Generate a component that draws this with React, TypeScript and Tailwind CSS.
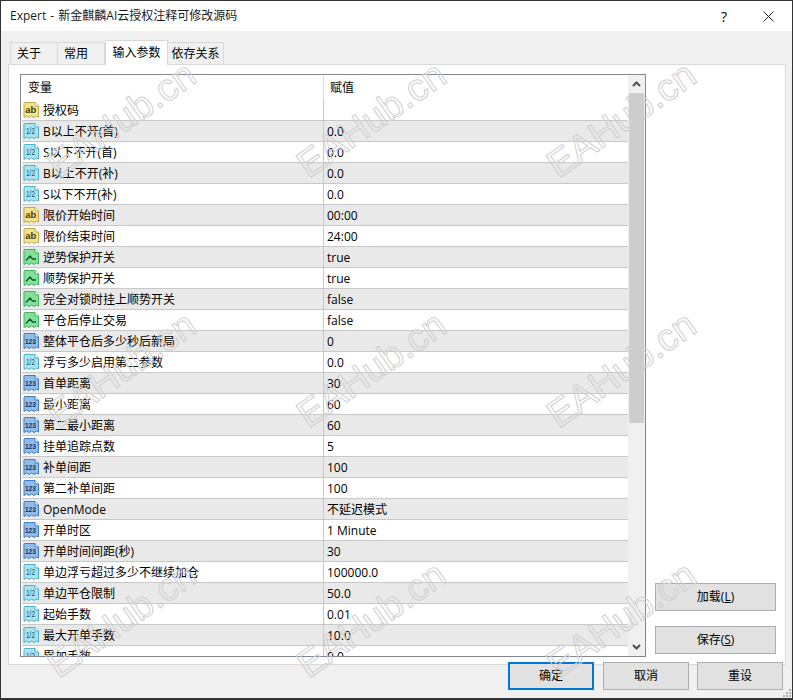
type Kind = "ab" | "half" | "bool" | "num";

const rows: [Kind, string, string][] = [
  ["ab", "授权码", ""],
  ["half", "B以上不开(首)", "0.0"],
  ["half", "S以下不开(首)", "0.0"],
  ["half", "B以上不开(补)", "0.0"],
  ["half", "S以下不开(补)", "0.0"],
  ["ab", "限价开始时间", "00:00"],
  ["ab", "限价结束时间", "24:00"],
  ["bool", "逆势保护开关", "true"],
  ["bool", "顺势保护开关", "true"],
  ["bool", "完全对锁时挂上顺势开关", "false"],
  ["bool", "平仓后停止交易", "false"],
  ["num", "整体平仓后多少秒后新局", "0"],
  ["half", "浮亏多少启用第二参数", "0.0"],
  ["num", "首单距离", "30"],
  ["num", "最小距离", "60"],
  ["num", "第二最小距离", "60"],
  ["num", "挂单追踪点数", "5"],
  ["num", "补单间距", "100"],
  ["num", "第二补单间距", "100"],
  ["num", "OpenMode", "不延迟模式"],
  ["num", "开单时区", "1 Minute"],
  ["num", "开单时间间距(秒)", "30"],
  ["half", "单边浮亏超过多少不继续加仓", "100000.0"],
  ["half", "单边平仓限制", "50.0"],
  ["half", "起始手数", "0.01"],
  ["half", "最大开单手数", "10.0"],
  ["half", "累加手数", "0.0"],
];

const iconColors: Record<Kind, { fill: string; edge: string; ink: string }> = {
  ab: { fill: "#f3e48e", edge: "#c2a84a", ink: "#4a3c08" },
  half: { fill: "#a9e4f0", edge: "#4fb0cc", ink: "#14546e" },
  bool: { fill: "#84e09a", edge: "#3fb561", ink: "#0f5a26" },
  num: { fill: "#92bdea", edge: "#3f7fc4", ink: "#0c3468" },
};

function TypeIcon({ kind }: { kind: Kind }) {
  const c = iconColors[kind];
  return (
    <svg width="16" height="16" viewBox="0 0 16 16" className="shrink-0">
      <path
        d="M1 1.5Q1 .5 2 .5H12L15.5 4V15L13.5 14L11 15.5L8.5 14L6 15.5L3.5 14L1 15.5Z"
        fill={c.fill}
        stroke={c.edge}
        strokeWidth="1"
      />
      <path d="M12 .5V4H15.5" fill="#ffffff" stroke={c.edge} strokeWidth="1" />
      {kind === "ab" && (
        <text x="2.2" y="11" fontSize="9.5" fontWeight="700" fontFamily="Liberation Sans, sans-serif" fill={c.ink}>
          ab
        </text>
      )}
      {kind === "half" && (
        <text
          x="3"
          y="11"
          fontSize="8.5"
          textLength="9"
          lengthAdjust="spacingAndGlyphs"
          fontFamily="Liberation Sans, sans-serif"
          fill={c.ink}
        >
          1/2
        </text>
      )}
      {kind === "num" && (
        <text x="1.9" y="11" fontSize="6.6" fontWeight="700" fontFamily="Liberation Sans, sans-serif" fill={c.ink}>
          123
        </text>
      )}
      {kind === "bool" && <path d="M3 11.5L7 7L9.5 10H13" fill="none" stroke={c.ink} strokeWidth="1.3" />}
    </svg>
  );
}

function Row({ kind, name, value, index }: { kind: Kind; name: string; value: string; index: number }) {
  return (
    <div
      className={`ml-[1px] flex h-[21px] shrink-0 items-center border-b border-[#c8c8c8] ${index % 2 === 1 ? "bg-[#e9e9e9]" : "bg-white"}`}
    >
      <div className="flex w-[301px] shrink-0 items-center gap-[4px] pl-[1px]">
        <TypeIcon kind={kind} />
        <span className="whitespace-nowrap pt-[1px]">{name}</span>
      </div>
      <div className="h-full w-px shrink-0 bg-[#c8c8c8]" />
      <span className="whitespace-nowrap pl-[3px] pt-[1px]">{value}</span>
    </div>
  );
}

function Btn({ label, hot, primary }: { label: string; hot?: string; primary?: boolean }) {
  return (
    <button
      className={`flex h-[28px] w-full items-center justify-center bg-[#e1e1e1] text-[12px] text-black ${
        primary ? "border-2 border-[#0078d7]" : "border border-[#adadad]"
      }`}
    >
      {label}
      {hot && (
        <span>
          (<span className="underline">{hot}</span>)
        </span>
      )}
    </button>
  );
}

const marks = [
  "left-[61px] top-[145px]",
  "left-[311px] top-[145px]",
  "left-[561px] top-[145px]",
  "left-[61px] top-[395px]",
  "left-[311px] top-[395px]",
  "left-[561px] top-[395px]",
  "left-[61px] top-[645px]",
  "left-[311px] top-[645px]",
  "left-[561px] top-[645px]",
];

export default function App() {
  return (
    <div className="relative flex h-[700px] w-[793px] flex-col overflow-hidden border border-b-2 border-[#333333] bg-[#f0f0f0] font-['Open_Sans','Noto_Sans_CJK_SC',sans-serif] text-[12px] text-black">
      {/* title bar */}
      <div className="flex h-[30px] shrink-0 items-center justify-between bg-white pl-[9px] pr-[18px]">
        <span className="text-[#1a1a1a] [word-spacing:1px]">Expert - 新金麒麟AI云授权注释可修改源码</span>
        <div className="flex items-center gap-[36px]">
          <span className="text-[14px]">?</span>
          <svg width="11" height="11" viewBox="0 0 11 11">
            <path d="M0.5 0.5L10.5 10.5M10.5 0.5L0.5 10.5" stroke="#222" strokeWidth="1" />
          </svg>
        </div>
      </div>

      {/* tabs */}
      <div className="flex h-[33px] shrink-0 items-end pl-[9px]">
        <div className="flex h-[22px] w-[48px] items-center border border-b-0 border-[#d9d9d9] bg-[#f0f0f0] pl-[6px]">关于</div>
        <div className="flex h-[22px] w-[47px] items-center border border-b-0 border-l-0 border-[#d9d9d9] bg-[#f0f0f0] pl-[6px]">常用</div>
        <div className="relative z-10 -mb-px flex h-[25px] w-[63px] items-center justify-center border border-b-0 border-[#d9d9d9] bg-white">输入参数</div>
        <div className="flex h-[22px] w-[56px] items-center justify-center border border-b-0 border-l-0 border-[#d9d9d9] bg-[#f0f0f0]">依存关系</div>
      </div>

      {/* tab panel */}
      <div className="ml-[7px] mr-[6px] flex h-[601px] shrink-0 gap-[9px] border border-[#d9d9d9] bg-white pl-[11px] pr-[9px] pt-[9px]">
        <div className="flex h-[583px] w-[626px] shrink-0 border border-[#828790] bg-white">
          <div className="flex min-w-0 flex-1 flex-col overflow-hidden">
            <div className="flex h-[25px] shrink-0 items-center">
              <span className="w-[302px] pl-[7px] pt-[1px]">变量</span>
              <div className="h-full w-px bg-[#d9d9d9]" />
              <span className="pl-[6px] pt-[1px]">赋值</span>
            </div>
            {rows.map(([kind, name, value], i) => (
              <Row key={name} kind={kind} name={name} value={value} index={i} />
            ))}
          </div>
          <div className="flex w-[17px] shrink-0 flex-col bg-[#f0f0f0]">
            <div className="flex h-[18px] items-center justify-center">
              <svg width="9" height="6" viewBox="0 0 9 6">
                <path d="M1 5L4.5 1.5L8 5" fill="none" stroke="#505050" strokeWidth="2" />
              </svg>
            </div>
            <div className="ml-[1px] h-[330px] w-[15px] bg-[#cdcdcd]" />
            <div className="flex-1" />
            <div className="flex h-[18px] items-center justify-center">
              <svg width="9" height="6" viewBox="0 0 9 6">
                <path d="M1 1L4.5 4.5L8 1" fill="none" stroke="#505050" strokeWidth="2" />
              </svg>
            </div>
          </div>
        </div>
        <div className="flex h-[580px] flex-1 flex-col justify-end gap-[15px]">
          <Btn label="加载" hot="L" />
          <Btn label="保存" hot="S" />
        </div>
      </div>

      {/* dialog buttons */}
      <div className="relative z-10 -mt-[3px] flex justify-end gap-[8px] pr-[9px]">
        <div className="mr-[1px] w-[86px]">
          <Btn label="确定" primary />
        </div>
        <div className="w-[86px]">
          <Btn label="取消" />
        </div>
        <div className="w-[86px]">
          <Btn label="重设" />
        </div>
      </div>

      {/* resize grip */}
      <svg width="10" height="10" viewBox="0 0 10 10" className="absolute bottom-0 right-0">
        <path d="M7 1h2v2H7zM4 4h2v2H4zM7 4h2v2H7zM1 7h2v2H1zM4 7h2v2H4zM7 7h2v2H7z" fill="#b0b0b0" />
      </svg>

      {/* watermark */}
      {marks.map((pos) => (
        <span
          key={pos}
          className={`pointer-events-none absolute z-20 origin-bottom-left -rotate-[35deg] whitespace-nowrap font-['Liberation_Sans',sans-serif] text-[38px] leading-none text-transparent [-webkit-text-stroke:1px_#cfcfcf] ${pos}`}
        >
          EAHub.cn
        </span>
      ))}
    </div>
  );
}
